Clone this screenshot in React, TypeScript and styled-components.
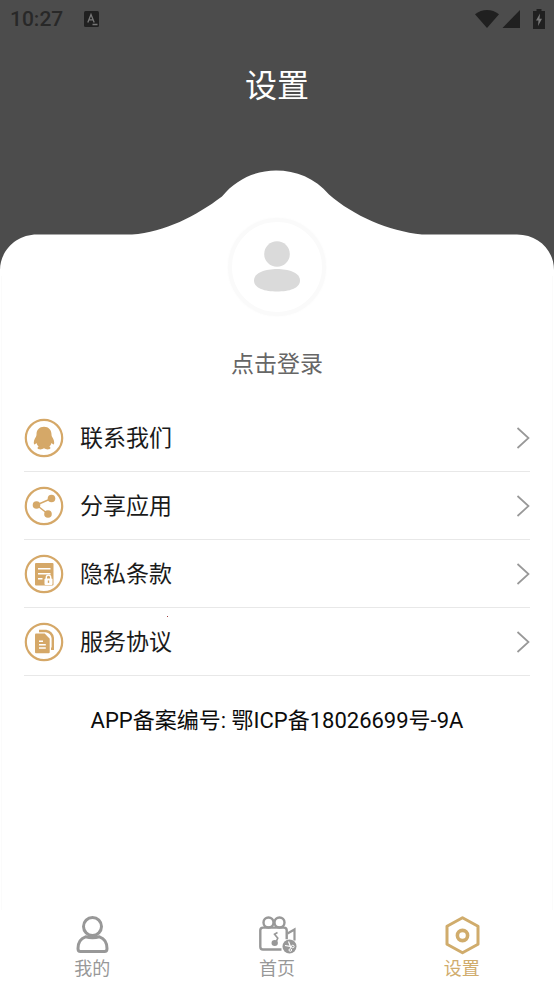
import React from "react";
import styled, { createGlobalStyle } from "styled-components";

const GOLD = "#d5a868";
const TAB_GOLD = "#d0ac6c";
const GREY = "#989898";

const GlobalStyle = createGlobalStyle`
  * { box-sizing: border-box; }
  body {
    margin: 0;
    background: #ffffff;
    font-family: Roboto, "Noto Sans CJK SC", sans-serif;
  }
`;

const Page = styled.div`
  display: flex;
  flex-direction: column;
  min-height: 100vh;
`;

const Hero = styled.header`
  background: #4c4c4c;
`;

const StatusBar = styled.div`
  display: flex;
  align-items: center;
  height: 38px;
  padding: 0 9px 0 10px;
  color: #282828;
`;

const Clock = styled.time`
  font-size: 21px;
  font-weight: 500;
  line-height: 24px;
`;

const StatusIcon = styled.svg`
  display: block;
  flex: none;
`;

const Notice = styled.div`
  flex: 1;
  padding-left: 21px;
`;

const Indicators = styled.div`
  display: flex;
  align-items: center;
`;

const Title = styled.h1`
  margin: 0;
  padding: 24px 0 60px;
  color: #ffffff;
  font-size: 32px;
  font-weight: 400;
  line-height: 48px;
  text-align: center;
`;

const Curve = styled.svg`
  display: block;
  width: 100%;
  height: 106px;
`;

const Content = styled.main`
  flex: 1;
  margin: 0 1px;
  border: solid #fbfbfb;
  border-width: 0 1px;
`;

const Profile = styled.button`
  position: relative;
  display: flex;
  flex-direction: column;
  align-items: center;
  gap: 32px;
  margin: -58px auto 0;
  padding: 0;
  border: 0;
  background: none;
  color: #666666;
  font: inherit;
  font-size: 23px;
  line-height: 34px;
  cursor: pointer;
`;

const Avatar = styled.span`
  display: flex;
  align-items: center;
  justify-content: center;
  width: 98px;
  height: 98px;
  border: 4px solid #fafafa;
  border-radius: 50%;
  background: #ffffff;
  box-shadow: 0 0 3px #fafafa;
`;

const Menu = styled.nav`
  margin: 22px 22px 0;
`;

const MenuRow = styled.a`
  position: relative;
  display: flex;
  align-items: center;
  height: 68px;
  border-bottom: 1px solid #e8e8e8;
  color: #1a1a1a;
  text-decoration: none;
`;

const RowLabel = styled.span`
  flex: 1;
  padding: 2px 0 0 16px;
  font-size: 23px;
  line-height: 34px;
`;

const UnreadDot = styled.i`
  position: absolute;
  top: 8px;
  left: 143px;
  width: 1px;
  height: 1px;
  background: #a04040;
`;

const Filing = styled.p`
  margin: 28px 0;
  color: #0c0c0c;
  font-size: 22px;
  line-height: 34px;
  text-align: center;
`;

const TabBar = styled.nav`
  display: grid;
  grid-template-columns: repeat(3, 1fr);
  height: 74px;
`;

const Tab = styled.a<{ $active?: boolean }>`
  display: flex;
  flex-direction: column;
  align-items: center;
  padding-top: 5px;
  color: ${(p) => (p.$active ? TAB_GOLD : GREY)};
  font-size: 18px;
  line-height: 28px;
  text-decoration: none;
`;

const RowIcon = ({ children }: { children: React.ReactNode }) => (
  <svg width="40" height="40" viewBox="0 0 40 40" fill="none" aria-hidden="true">
    <circle cx="20" cy="20" r="18.2" stroke={GOLD} strokeWidth="2.2" />
    {children}
  </svg>
);

const PenguinIcon = () => (
  <RowIcon>
    <path
      fill={GOLD}
      d="M20 8.800c-4.700 0-7.500 3.300-7.500 7.400 0 1-.1 1.700-.7 2.700-1.500 2.500-2.300 4.800-1.900 6.800.1.800.8.900 1.400.4l1.200-1.200c.4 1.500 1.100 2.600 2.200 3.600-1.400.6-1.700 2.500.3 2.800 1.800.3 3.700 0 5-1 1.300 1 3.200 1.300 5 1 2-.3 1.700-2.200.3-2.800 1.100-1 1.800-2.100 2.200-3.600l1.200 1.200c.6.500 1.300.4 1.400-.4.4-2-.4-4.300-1.900-6.800-.6-1-.7-1.700-.7-2.700 0-4.100-2.800-7.400-7.500-7.400z"
    />
  </RowIcon>
);

const ShareIcon = () => (
  <RowIcon>
    <path d="M27.500 12.500 12.500 19 24 28" stroke={GOLD} strokeWidth="1.400" />
    <circle cx="27.500" cy="12.500" r="3.800" fill={GOLD} />
    <circle cx="12.500" cy="19" r="3.800" fill={GOLD} />
    <circle cx="24" cy="28" r="3.800" fill={GOLD} />
  </RowIcon>
);

const PrivacyIcon = () => (
  <RowIcon>
    <rect x="11" y="9" width="18.500" height="22.500" rx="1" fill={GOLD} />
    <path d="M14 14.800h12.500M14 19.800h12.500M14 24.800h4.500" stroke="#fff" strokeWidth="1.600" />
    <rect x="20.500" y="24.500" width="8" height="6.500" rx="1" fill="#fff" />
    <path d="M22.300 25v-1.700a2.200 2.200 0 0 1 4.400 0V25" stroke="#fff" strokeWidth="1.400" />
    <path d="M24.500 26.500v2.400" stroke={GOLD} strokeWidth="1.400" />
  </RowIcon>
);

const TermsIcon = () => (
  <RowIcon>
    <path
      fill={GOLD}
      d="M12 11.500h8.700l5 5.200V30.300q0 1-1 1H12q-1 0-1-1V12.500q0-1 1-1z"
    />
    <path d="M15 9H22c4 .8 6.300 3 6.800 7v10.800h-1.800" stroke={GOLD} strokeWidth="2.400" />
    <path d="M15 19.300h4M15 22.700h6.800M15 26h6.800" stroke="#fff" strokeWidth="1.500" />
  </RowIcon>
);

const Chevron = () => (
  <svg width="14" height="24" viewBox="0 0 14 24" fill="none" aria-hidden="true">
    <path d="M1.500 2 12.500 12 1.500 22" stroke="#989898" strokeWidth="1.700" />
  </svg>
);

const rows = [
  { label: "联系我们", icon: <PenguinIcon /> },
  { label: "分享应用", icon: <ShareIcon /> },
  { label: "隐私条款", icon: <PrivacyIcon /> },
  { label: "服务协议", icon: <TermsIcon />, dot: true },
];

const MineIcon = () => (
  <svg width="40" height="40" viewBox="0 0 40 40" fill="none" stroke="currentColor" strokeWidth="3" aria-hidden="true">
    <circle cx="20.500" cy="11.500" r="9" />
    <path d="M13.500 21.800C8.500 23.500 6 27.500 6 33.500q0 3 2.500 3h24q2.500 0 2.500-3c0-6-2.500-10-7.500-11.700-4.800 1.200-9.200 1.200-14 0z" strokeLinejoin="round" />
  </svg>
);

const HomeIcon = () => (
  <svg width="40" height="40" viewBox="0 0 40 40" fill="none" stroke="currentColor" aria-hidden="true">
    <circle cx="11.500" cy="7.500" r="5" strokeWidth="2.400" />
    <circle cx="22.500" cy="7.500" r="5" strokeWidth="2.400" />
    <path d="M24.500 34.500H6q-2.700 0-2.700-2.700V15.300Q3.300 12.600 6 12.600h21q2.700 0 2.700 2.700v9" strokeWidth="2.400" />
    <path d="M30.500 18.500 37.500 14.500v11" strokeWidth="2.200" />
    <path d="M20.500 17.500l-3 1.700 3.300 4-2.300 5" strokeWidth="1.600" />
    <ellipse cx="17.700" cy="28" rx="3.200" ry="2.900" fill="currentColor" stroke="none" />
    <circle cx="32.500" cy="31.500" r="7" fill="currentColor" stroke="none" />
    <path d="M28 30.500l6.500 1.200M31.500 26.500l2.500 6.500" stroke="#fff" strokeWidth="1.200" />
    <circle cx="35.800" cy="31.500" r="1.300" stroke="#fff" />
    <circle cx="33.300" cy="35" r="1.300" stroke="#fff" />
  </svg>
);

const SettingsIcon = () => (
  <svg width="40" height="40" viewBox="0 0 40 40" fill="none" stroke="currentColor" aria-hidden="true">
    <path d="M20.500 2.800 36 11.300v18L20.500 37.800 5 29.300v-18z" strokeWidth="3" strokeLinejoin="round" />
    <circle cx="20.500" cy="20.500" r="5.100" strokeWidth="3.600" />
  </svg>
);

export default function App() {
  return (
    <Page>
      <GlobalStyle />
      <Hero>
        <StatusBar>
          <Clock>10:27</Clock>
          <Notice>
            <StatusIcon width="15" height="16" viewBox="0 0 15 16" aria-hidden="true">
              <rect width="15" height="16" rx="1.500" fill="#202020" />
              <path d="M3.800 11.500 7 3.500l3.200 8M5 8.800h4M8.500 13.500h5" fill="none" stroke="#777" strokeWidth="1.300" />
            </StatusIcon>
          </Notice>
          <Indicators>
            <StatusIcon width="24" height="20" viewBox="0 0 24 20" aria-hidden="true">
              <path d="M0 5.300C7-.5 17-.5 24 5.300L12 19z" fill="#202020" />
            </StatusIcon>
            <StatusIcon width="22" height="20" viewBox="0 0 22 20" aria-hidden="true">
              <path d="M21 1v18H3.500z" fill="#202020" />
            </StatusIcon>
            <StatusIcon width="24" height="20" viewBox="0 0 24 20" aria-hidden="true">
              <path d="M15.500 0h5v2H24v18H12V2h3.500z" fill="#202020" />
              <path d="M19 4.500 15 11.500h2.500L17 17l4-7.200h-2.500z" fill="#777" />
            </StatusIcon>
          </Indicators>
        </StatusBar>
        <Title>设置</Title>
        <Curve viewBox="0 0 554 106" preserveAspectRatio="none" aria-hidden="true">
          <path
            fill="#fff"
            d="M0 106V100C0 81 16 64.500 37 64.500H132C165 62 196 46 222 26.500C236 9 256 .5 276 .5S315 8 329 24.500C354 46 388 61 422 64.500H517C538 64.500 554 80 554 100V106z"
          />
        </Curve>
      </Hero>
      <Content>
        <Profile type="button">
          <Avatar>
            <svg width="50" height="54" viewBox="0 0 50 54" fill="#dadada" aria-hidden="true">
              <circle cx="25" cy="14" r="12.800" />
              <path d="M25 29C36 29 48 32.500 48 40.500S37 51.500 25 51.500 2 48.500 2 40.500 14 29 25 29z" />
            </svg>
          </Avatar>
          点击登录
        </Profile>
        <Menu aria-label="设置">
          {rows.map((row) => (
            <MenuRow key={row.label} href="#">
              {row.icon}
              <RowLabel>{row.label}</RowLabel>
              <Chevron />
              {row.dot && <UnreadDot />}
            </MenuRow>
          ))}
        </Menu>
        <Filing>APP备案编号: 鄂ICP备18026699号-9A</Filing>
      </Content>
      <TabBar>
        <Tab href="#">
          <MineIcon />
          我的
        </Tab>
        <Tab href="#">
          <HomeIcon />
          首页
        </Tab>
        <Tab href="#" $active aria-current="page">
          <SettingsIcon />
          设置
        </Tab>
      </TabBar>
    </Page>
  );
}
